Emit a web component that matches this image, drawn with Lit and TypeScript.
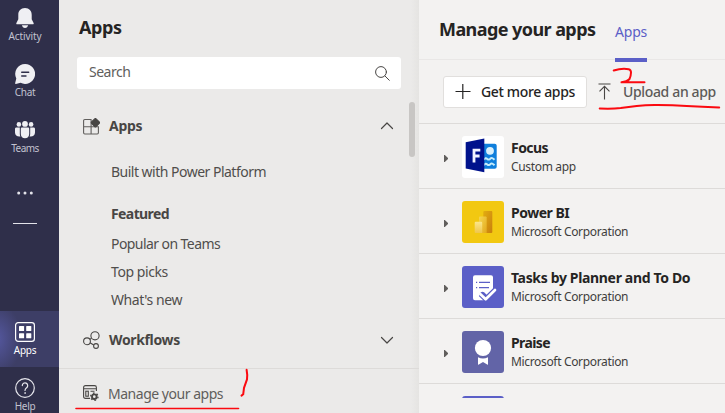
import { LitElement, html, svg, css, nothing, TemplateResult } from "lit";
import { customElement } from "lit/decorators.js";

const railIcons: Record<string, TemplateResult> = {
  bell: html`<svg width="20" height="20" viewBox="0 0 20 20" fill="#efeff3">
    <path d="M10 0c4.300 0 6.700 3 6.700 6.700v4.600l1.900 3.700c.35.700 0 1.300-.8 1.300H2.200c-.8 0-1.150-.6-.8-1.300l1.900-3.700V6.700C3.300 3 5.700 0 10 0z"/>
    <path d="M6.900 17.300h6.200c-.3 1.600-1.500 2.600-3.100 2.600s-2.800-1-3.100-2.600z"/></svg>`,
  chat: html`<svg width="20" height="20" viewBox="0 0 20 20">
    <path fill="#efeff3" d="M10.100 0a9.950 9.950 0 1 1-4.500 18.800L.9 19.950c-.5.100-.9-.3-.8-.8L1.300 14.500A9.950 9.950 0 0 1 10.100 0z"/>
    <path d="M6.700 8.200h7M6.700 12h4.300" stroke="#2f2f4a" stroke-width="1.400" stroke-linecap="round"/></svg>`,
  teams: html`<svg width="20" height="20" viewBox="0 0 20 20" fill="#efeff3">
    <circle cx="3.900" cy="4.400" r="2.300"/><circle cx="16.100" cy="4.400" r="2.300"/><circle cx="10" cy="3.900" r="2.900"/>
    <path d="M1.400 7.600h3.400v6.200c0 1 .2 1.900.6 2.700C2.500 17 0 15.500 0 12.600V9c0-.8.6-1.400 1.400-1.400zM18.600 7.600h-3.400v6.200c0 1-.2 1.900-.6 2.700 2.900.5 5.400-1 5.400-3.900V9c0-.8-.6-1.400-1.400-1.400z"/>
    <path d="M7.100 7.600h5.800c.8 0 1.300.5 1.300 1.300v5c0 2.600-1.900 4.400-4.200 4.400s-4.200-1.800-4.200-4.400v-5c0-.8.500-1.300 1.300-1.300z"/></svg>`,
  more: html`<svg width="20" height="20" viewBox="0 0 20 20" fill="#e3e3ea"><circle cx="3.700" cy="10" r="1.500"/><circle cx="10" cy="10" r="1.500"/><circle cx="16.300" cy="10" r="1.500"/></svg>`,
  apps: html`<svg width="20" height="20" viewBox="0 0 20 20" fill="#fff">
    <rect x=".6" y=".6" width="18.800" height="18.800" rx="2.600" fill="none" stroke="#fff" stroke-width="1.200"/>
    <rect x="4" y="4" width="5.100" height="5.100" rx=".6"/><rect x="11.200" y="4" width="5.100" height="5.100" rx=".6"/>
    <rect x="4" y="11.200" width="5.100" height="5.100" rx=".6"/><rect x="11.200" y="11.200" width="5.100" height="5.100" rx=".6"/></svg>`,
  help: html`<svg width="20" height="20" viewBox="0 0 20 20" fill="none" stroke="#e6e6ec" stroke-width="1.200" stroke-linecap="round">
    <circle cx="10" cy="10" r="9.300"/><path d="M7.300 7.600a2.700 2.700 0 1 1 4.400 2.100c-1 .8-1.700 1.300-1.700 2.800"/><circle cx="10" cy="15" r=".5" fill="#e6e6ec" stroke-width=".6"/></svg>`,
};

const chevron = (up: boolean) => html`<svg class="chev" width="14" height="14" viewBox="0 0 14 14" fill="none" stroke="#484644" stroke-width="1.200" stroke-linecap="round" stroke-linejoin="round">
  <path d=${up ? "M1.500 9.500 7 4l5.500 5.500" : "M1.500 4.500 7 10l5.500-5.500"}/></svg>`;

const appTiles: Record<string, TemplateResult> = {
  focus: svg`<rect width="42" height="42" rx="3" fill="#fff"/>
    <rect x="20" y="7.700" width="14.700" height="25" rx="2" fill="#0f7fdc"/>
    <circle cx="28" cy="14.800" r="3.900" fill="#d9f0fc"/>
    <path d="M22 23.800q1.500-2.600 3.300-.8 1.600 1.400 3.100-.4 1.600-1.500 4.100 1.200M22 29.300q1.500-2.600 3.300-.8 1.600 1.400 3.100-.4 1.600-1.500 4.100 1.200" fill="none" stroke="#c6ecfb" stroke-width="2"/>
    <path d="M3.700 6.300 22.300 2.500v33.700L3.700 32.500z" fill="#00128c"/>
    <path d="M12 26.500V14.200h6.300M12 20h5.600" fill="none" stroke="#f1f3ff" stroke-width="2.800"/>`,
  powerbi: svg`<defs>
      <linearGradient id="b1" x1="0" y1="0" x2="1" y2="1"><stop offset="0" stop-color="#e3ad10"/><stop offset="1" stop-color="#c87e0e"/></linearGradient>
      <linearGradient id="b2" x1="0" y1="0" x2="1" y2="1"><stop offset="0" stop-color="#f6d751"/><stop offset="1" stop-color="#e3a91c"/></linearGradient>
      <linearGradient id="b3" x1="0" y1="0" x2="0" y2="1"><stop offset="0" stop-color="#fbe68c"/><stop offset="1" stop-color="#efc64a"/></linearGradient>
    </defs>
    <rect width="42" height="42" rx="3" fill="#f2c811"/>
    <rect x="21.300" y="10" width="9" height="22" rx="1" fill="url(#b1)"/>
    <path d="M17 16.500q0-1 1-1h5.700q1 0 1 1V32H17z" fill="url(#b2)"/>
    <path d="M12.700 21.700q0-1 1-1h5.500q1 0 1 1V32h-6.500q-1 0-1-1z" fill="url(#b3)"/>`,
  tasks: svg`<rect width="42" height="42" rx="3" fill="#5b5fc7"/>
    <path d="M13 9.300h16q2 0 2 2v11.200l-6.400 6.300-2.500-2.500q-2.600-1.500-4.200 1.200-.8 1.900.8 3.300l3.200 3.400H13q-2 0-2-2V11.300q0-2 2-2z" fill="#fff"/>
    <path d="M14 16.300h1.200M17 16.300h11M14 21.700h1.200M17 21.700h10" stroke="#5b5fc7" stroke-width="1.300"/>
    <path d="m18.500 28.300 5.200 5L33 24" fill="none" stroke="#5b5fc7" stroke-width="5"/>
    <path d="m18.500 28.300 5.200 5L33 24" fill="none" stroke="#fff" stroke-width="2.700" stroke-linecap="round" stroke-linejoin="round"/>`,
  praise: svg`<rect width="42" height="42" rx="3" fill="#6264a7"/>
    <circle cx="21" cy="17" r="8.100" fill="#fff"/>
    <path d="M16 26.300q5 2.400 10 0v6.900q0 .8-.8.4L21 30.900l-4.200 2.700q-.8.400-.8-.4z" fill="#fff"/>`,
  next: svg`<rect width="42" height="42" rx="3" fill="#5b5fc7"/>`,
};

const apps = [
  { icon: "focus", name: "Focus", by: "Custom app", sp: "l55" },
  { icon: "powerbi", name: "Power BI", by: "Microsoft Corporation", sp: "l50" },
  { icon: "tasks", name: "Tasks by Planner and To Do", by: "Microsoft Corporation", sp: "l35" },
  { icon: "praise", name: "Praise", by: "Microsoft Corporation", sp: "l60" },
  { icon: "next", name: "", by: "", sp: "" },
];

@customElement("app-rail")
export class AppRail extends LitElement {
  static styles = css`
    :host { display: block; width: 59px; flex: none; background: #2f2f4a; overflow: hidden; }
    nav { display: flex; flex-direction: column; margin-top: -3px; height: 426px; }
    .item { box-sizing: border-box; height: 56px; flex: none; width: 59px; padding: 11px 9px 0 0; display: flex; flex-direction: column; align-items: center; gap: 2px; color: #c2c2d0; font-size: 10px; line-height: 12px; }
    .item.more { padding-top: 18px; }
    .item.on { color: #fff; background: radial-gradient(ellipse 26px 36px at -4px 50%, #5558a0, #3d3e66 100%); }
    .t { letter-spacing: -0.5px; } .a { letter-spacing: -0.1px; } .c { letter-spacing: -0.3px; }
    svg { display: block; }
    .rule { width: 24px; height: 1px; background: #e3e3ea; margin: 2px 0 0 13px; }
    .gap { flex: 1; }
  `;
  item(icon: string, label: string, cls = "", on = false) {
    return html`<div class="item ${on ? "on" : ""} ${label ? "" : "more"}">${railIcons[icon]}${label ? html`<span class=${cls}>${label}</span>` : nothing}</div>`;
  }
  render() {
    return html`<nav>
      ${this.item("bell", "Activity", "a")}${this.item("chat", "Chat", "c")}${this.item("teams", "Teams", "t")}${this.item("more", "")}
      <div class="rule"></div><div class="gap"></div>
      ${this.item("apps", "Apps", "c", true)}${this.item("help", "Help", "c")}
    </nav>`;
  }
}

@customElement("app-panel")
export class AppPanel extends LitElement {
  static styles = css`
    :host { display: flex; flex-direction: column; box-sizing: border-box; width: 360px; flex: none; background: linear-gradient(90deg, #ebeae9 0, #ebeae9 352px, #e5e4e2 360px); color: #504e4c; font-size: 14px; }
    svg { display: block; flex: none; }
    h1 { margin: 15px 0 18px 20px; font-size: 18px; line-height: 24px; color: #252423; letter-spacing: -0.4px; }
    .search { margin-left: 18px; width: 324px; height: 32px; box-sizing: border-box; padding: 0 11px 3px 12px; background: #fff; border-radius: 3px; display: flex; align-items: center; justify-content: space-between; letter-spacing: -0.5px; color: #605e5c; }
    .search svg { margin-top: 3px; }
    .body { display: flex; flex: 1; padding-top: 13px; }
    .tree { flex: 1; }
    .thumb { width: 6px; height: 55px; border-radius: 3px; background: #c8c6c4; margin-right: 4px; }
    .section { height: 40px; margin: 4px 15px 0 24px; display: flex; align-items: center; gap: 9px; font-weight: 700; color: #484644; }
    .section .chev { margin-left: auto; }
    .section span { margin-bottom: 2px; }
    .link, .sub { height: 28px; line-height: 28px; padding-left: 52px; }
    .sub { font-weight: 700; letter-spacing: -0.6px; margin: 14px 0 2px; color: #484644; }
    .first { margin-top: 12px; }
    .second { margin-top: 6px; }
    .l30 { letter-spacing: -0.3px; } .l35 { letter-spacing: -0.35px; } .l42 { letter-spacing: -0.42px; }
    .l50 { letter-spacing: -0.51px; } .l57 { letter-spacing: -0.57px; }
    footer { height: 40px; flex: none; border-top: 1px solid #dddbd9; padding: 4px 0 0 24px; display: flex; align-items: center; gap: 9px; letter-spacing: -0.48px; color: #605e5c; }
  `;
  render() {
    return html`
      <h1>Apps</h1>
      <div class="search"><span>Search</span>
        <svg width="15" height="15" viewBox="0 0 15 15" fill="none" stroke="#484644" stroke-width="1" stroke-linecap="round"><circle cx="6" cy="6" r="5.400"/><path d="m10 10 4.300 4.300"/></svg>
      </div>
      <div class="body"><div class="tree">
        <div class="section">
          <svg width="17" height="17" viewBox="0 0 17 17" fill="none" stroke="#605e5c" stroke-width="1.100"><path d="M8.500 1.500H1.800Q.6 1.500.6 2.700v12.100Q.6 16 1.800 16h12.400q1.200 0 1.200-1.200V8.700H.6M8.100 1.500V16"/><rect x="9.200" y="1.500" width="6.400" height="6.400" rx="1" transform="rotate(45 12.400 4.700)" fill="#484644" stroke="#484644"/></svg>
          <span class="l30">Apps</span>${chevron(true)}
        </div>
        <div class="link first l50">Built with Power Platform</div>
        <div class="sub">Featured</div>
        <div class="link l57">Popular on Teams</div>
        <div class="link l42">Top picks</div>
        <div class="link l42">What's new</div>
        <div class="section second">
          <svg width="17" height="18" viewBox="0 0 17 18" fill="none" stroke="#484644" stroke-width="1.100"><circle cx="12" cy="4.800" r="4.100"/><circle cx="4" cy="10.300" r="3.400"/><circle cx="13" cy="15" r="2.400"/><path d="m6.800 8.400 1.700-1.100M7 11.800l3.700 2.100"/></svg>
          <span class="l35">Workflows</span>${chevron(false)}
        </div>
      </div><div class="thumb"></div></div>
      <footer>
        <svg width="16" height="16" viewBox="0 0 16 16" fill="none" stroke="#484644" stroke-width="1.100"><path d="M7 13.400H2.500Q.6 13.400.6 11.500v-9Q.6.600 2.500.6h9q1.900 0 1.900 1.900V6M.6 3.800h12.800M7.500 6.300h4"/><rect x="2.800" y="6.200" width="2.500" height="5"/><circle cx="11.300" cy="11.700" r="2.300" stroke-width="1.900"/><circle cx="11.300" cy="11.700" r="3.700" stroke-width="1.300" stroke-dasharray="1.700 2.175"/></svg>
        <span>Manage your apps</span>
      </footer>`;
  }
}

@customElement("app-main")
export class AppMain extends LitElement {
  static styles = css`
    :host { display: flex; flex-direction: column; flex: 1; min-width: 0; background: #f3f2f1; color: #252423; font-size: 14px; overflow: hidden; }
    svg { display: block; flex: none; }
    header { height: 59px; flex: none; border-bottom: 1px solid #e9e7e6; display: flex; padding-left: 20px; }
    h1 { margin: 17px 0 0; width: 176px; white-space: nowrap; font-size: 18px; line-height: 24px; letter-spacing: -0.57px; }
    .tab { position: relative; height: 59px; line-height: 24px; padding-top: 20px; box-sizing: border-box; color: #5b5fc7; letter-spacing: -0.2px; width: 32px; }
    .tab::after { content: ""; position: absolute; left: 0; right: 0; top: 58px; height: 4px; background: #5b5fc7; }
    .bar { height: 63px; flex: none; border-bottom: 1px solid #dddbd9; display: flex; align-items: center; padding-left: 24px; font-weight: 500; letter-spacing: -0.35px; white-space: nowrap; }
    .bar span { margin-bottom: 1px; }
    .btn { box-sizing: border-box; width: 144px; height: 32px; background: #fff; border: 1px solid #e1dfdd; border-radius: 3px; display: flex; align-items: center; gap: 10px; padding-left: 11px; margin-right: 11px; }
    .up { display: flex; align-items: center; gap: 12px; color: #5c5a58; }
    .list { height: 274px; overflow: hidden; flex: none; }
    .row { height: 64px; border-bottom: 1px solid #dddbd9; display: flex; align-items: center; padding-left: 25px; }
    .arrow { margin-top: 4px; }
    .tile { margin: 2px 7px 0 14px; }
    .name { line-height: 20px; font-weight: 700; white-space: nowrap; }
    .by { line-height: 16px; margin: 1px 0 -1px; font-size: 12px; color: #3f3e3d; letter-spacing: -0.34px; }
    .l35 { letter-spacing: -0.34px; } .l50 { letter-spacing: -0.5px; } .l55 { letter-spacing: -0.55px; } .l60 { letter-spacing: -0.6px; }
  `;
  render() {
    return html`
      <header><h1>Manage your apps</h1><div class="tab">Apps</div></header>
      <div class="bar">
        <div class="btn"><svg width="16" height="16" viewBox="0 0 16 16" stroke="#252423" stroke-width="1.200"><path d="M.5 7.500h15M7.800 0v15"/></svg><span>Get more apps</span></div>
        <div class="up"><svg width="13" height="17" viewBox="0 0 13 17" fill="none" stroke="#484644" stroke-width="1.100"><path d="M.5 1h12M6.500 16.500V3.500M1.500 8.300l5-5 5 5"/></svg><span>Upload an app</span></div>
      </div>
      <div class="list">${apps.map((a) => html`<div class="row">
        <svg class="arrow" width="4" height="7" viewBox="0 0 4 7"><path d="M0 0h.8L4 3v1L.8 7H0z" fill="#605e5c"/></svg>
        <svg class="tile" width="42" height="42" viewBox="0 0 42 42">${appTiles[a.icon]}</svg>
        <div><div class="name ${a.sp}">${a.name}</div><div class="by">${a.by}</div></div>
      </div>`)}</div>`;
  }
}

@customElement("app-root")
export class AppRoot extends LitElement {
  static styles = css`
    :host { display: flex; position: relative; width: 725px; height: 413px; overflow: hidden; font-family: "Noto Sans", "Open Sans", sans-serif; }
    .ink { position: absolute; inset: 0; pointer-events: none; }
  `;
  render() {
    return html`<app-rail></app-rail><app-panel></app-panel><app-main></app-main>
      <svg class="ink" width="725" height="413" viewBox="0 0 725 413" fill="none" stroke="#fb0a10" stroke-width="2" stroke-linecap="round" stroke-linejoin="round">
        <path d="M76 408.500h162.500" stroke-width="1.600"/>
        <path d="M246.600 369.800q1 5 .4 9.500l-3 8.500-.8 6.500-1.700 1.300"/>
        <path d="M613.700 70.500q8-2.500 15-1.300 2.300.5 2.300 3.300-.1 3.500-1.500 6.500-2.500 2.800-8 3.300h23"/>
        <path d="M599.700 108.500q13 .4 21-.4l16-2.100q10-1.200 21-1 15 .2 29 1 15 .8 32.500 1.400"/>
      </svg>`;
  }
}
